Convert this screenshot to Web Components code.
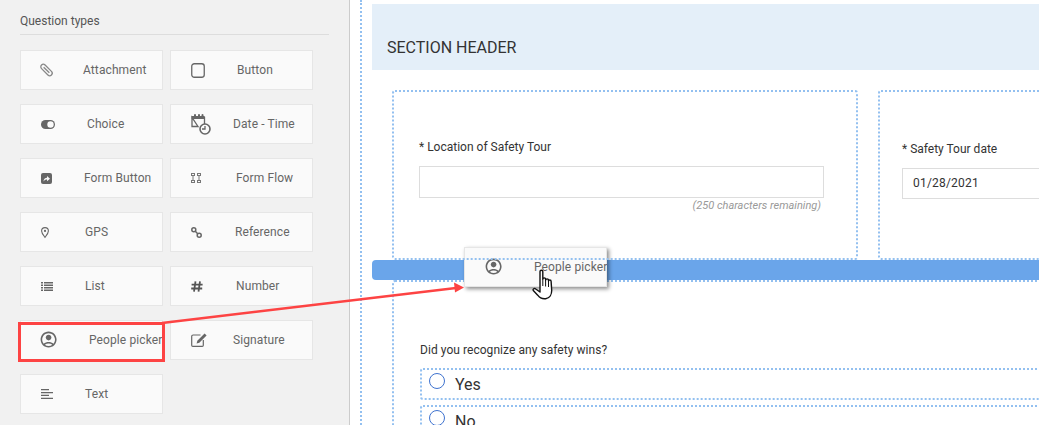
<!DOCTYPE html>
<html lang="en">
<head>
<meta charset="utf-8">
<title>Question types</title>
<style>
html,body{margin:0;padding:0;height:425px;overflow:hidden;background:#fff;font-family:Roboto,"Liberation Sans",sans-serif}
</style>
</head>
<body>
<form-builder></form-builder>
<script>
const M = (w,h,vb,body,extra='') => `<svg width="${w}" height="${h}" viewBox="${vb}" fill="#666" style="display:block;overflow:visible;${extra}" aria-hidden="true">${body}</svg>`;
const PERSON = '<path fill-rule="evenodd" d="M12 2C6.48 2 2 6.48 2 12s4.48 10 10 10 10-4.48 10-10S17.52 2 12 2zM7.35 18.5C8.66 17.56 10.26 17 12 17s3.34.56 4.65 1.5c-1.31.94-2.91 1.5-4.65 1.5s-3.34-.56-4.65-1.5zm10.79-1.38C16.45 15.8 14.32 15 12 15s-4.45.8-6.14 2.12C4.7 15.73 4 13.95 4 12c0-4.42 3.58-8 8-8s8 3.58 8 8c0 1.95-.7 3.73-1.86 5.12z"/><path d="M12 6c-1.93 0-3.5 1.57-3.5 3.5S10.07 13 12 13s3.5-1.57 3.5-3.5S13.93 6 12 6z"/>';
const ICONS = {
  attachment: M(11,12,'0 0 11 12','<g fill="none" stroke="#888" stroke-width="1.3" transform="rotate(-45 5.5 6)"><rect x="3" y="-1" width="5" height="14" rx="2.5"/><path d="M5.5 2v8"/></g>'),
  button: M(14,15,'0 0 14 15','<rect x=".75" y=".75" width="12.5" height="13.5" rx="2.5" fill="none" stroke="#666" stroke-width="1.3"/>'),
  choice: M(14,9,'0 0 14 9','<rect width="14" height="9" rx="4.5"/><circle cx="9.5" cy="4.5" r="3.2" fill="#fafafa"/>'),
  datetime: M(21,22,'0 0 21 22','<path d="M1 4.5h12.5v9M7 13.5H1V4.500z" fill="none" stroke="#666" stroke-width="1.3"/><rect x=".6" y="3" width="13" height="3" /><rect x="3" y="1" width="2" height="3.5" rx="1"/><rect x="7" y="1" width="2" height="3.500" rx="1"/><rect x="10.500" y="1" width="2" height="3.500" rx="1"/><circle cx="14" cy="16" r="5" fill="#fafafa" stroke="#666" stroke-width="1.600"/><path d="M14 13v3h-3" fill="none" stroke="#666" stroke-width="1.300"/>'),
  formbutton: M(11,11,'0 0 11 11','<rect width="11" height="11" rx="2"/><path d="M2.500 8.500c0-2.500 1.500-3.800 3.500-3.800V3l3 2.700L6 8.300V6.500c-1.500 0-2.500.6-3.500 2z" fill="#fafafa"/>'),
  formflow: M(10,10,'0 0 10 10','<g fill="none" stroke="#777" stroke-width="1"><rect x=".5" y=".5" width="3" height="2"/><rect x="6.500" y=".5" width="3" height="2"/><rect x=".5" y="7.500" width="3" height="2"/><rect x="6.500" y="7.500" width="3" height="2"/><path d="M2 2.500v5M8 2.500v5"/></g>'),
  gps: M(8,11,'0 0 8 11','<path d="M4 .6C2 .6.600 2.100.600 4c0 2.300 2.300 4.800 3.400 6.300C5.100 8.800 7.400 6.300 7.400 4 7.400 2.100 6 .6 4 .6z" fill="none" stroke="#666" stroke-width="1.100"/><circle cx="4" cy="3.900" r="1.100"/>'),
  reference: M(11,11,'0 0 11 11','<g fill="none" stroke="#666" stroke-width="1.500"><circle cx="2.800" cy="2.800" r="2"/><circle cx="8.200" cy="8.200" r="2"/><path d="M4.300 4.300l2.400 2.400"/></g>'),
  list: M(12,9,'0 0 12 9','<path d="M0 0h2v1.500H0zM3 0h9v1.500H3zM0 2.500h2V4H0zM3 2.500h9V4H3zM0 5h2v1.500H0zM3 5h9v1.500H3zM0 7.500h2V9H0zM3 7.500h9V9H3z"/>'),
  number: M(12,11,'0 0 12 11','<g fill="none" stroke="#555" stroke-width="1.800"><path d="M4.500.3L3 10.700M9 .3L7.500 10.700M.6 3.700h11M.2 7.500h11"/></g>'),
  person: M(19.200,19.200,'0 0 24 24',PERSON,'margin:-1.600px'),
  signature: M(16,14,'0 0 16 14','<path d="M9.500 2H2.200C1.300 2 .7 2.600.7 3.500v8.700c0 .6.500 1.100 1.100 1.100h9.400c.6 0 1.100-.5 1.100-1.100V7" fill="none" stroke="#666" stroke-width="1.200"/><path d="M13.600.4l2 2-7.300 7.300-2.700.7.700-2.700z"/>'),
  text: M(12,10,'0 0 12 10','<path d="M0 0h8v1.300H0zM0 2.900h12v1.300H0zM0 5.800h8v1.300H0zM0 8.700h12V10H0z"/>')
};

class BaseEl extends HTMLElement {
  render(html){ if(!this.shadowRoot) this.attachShadow({mode:'open'}); this.shadowRoot.innerHTML = html; }
}

class TypeCard extends BaseEl {
  connectedCallback(){
    const x = this.getAttribute('label-x');
    const i = ICONS[this.getAttribute('icon')];
    this.render(`<style>
      :host{display:block;box-sizing:border-box;height:40px;background:#fafafa;border:1px solid #e6e6e6;color:#666;font-size:12px}
      .in{display:grid;grid-template-columns:${x-21}px 1fr;align-items:center;height:38px;padding-left:20px}
      .l{white-space:nowrap;letter-spacing:.1px}
    </style><div class="in"><span>${i}</span><span class="l"><slot></slot></span></div>`);
  }
}
customElements.define('type-card', TypeCard);

class QuestionPanel extends BaseEl {
  connectedCallback(){
    this.render(`<style>
      :host{display:block;box-sizing:border-box;width:350px;height:425px;flex:none;background:#f1f1f1;border-right:1px solid #ccc;padding:0 20px}
      h2{margin:0;height:35px;box-sizing:border-box;padding-top:14px;font:400 12px/15px Roboto,sans-serif;color:#555;border-bottom:1px solid #ddd;width:309px}
      .g{display:grid;grid-template-columns:143px 143px;column-gap:7px;row-gap:14px;margin-top:15px}
    </style><h2>Question types</h2><div class="g"><slot></slot></div>`);
  }
}
customElements.define('question-panel', QuestionPanel);

class SectionHeader extends BaseEl {
  connectedCallback(){
    this.render(`<style>
      :host{display:block;box-sizing:border-box;height:66px;margin-top:4px;background:#e4eff9;padding:34px 0 0 15px;font-size:16px;line-height:19px;color:#333;white-space:nowrap;width:800px}
    </style><slot></slot>`);
  }
}
customElements.define('section-header', SectionHeader);

class FieldBox extends BaseEl {
  connectedCallback(){
    this.render(`<style>
      :host{display:block;box-sizing:border-box;border:2px dotted #93c0f0;border-radius:3px;flex:none;color:#333;font-size:12px}
    </style><slot></slot>`);
  }
}
customElements.define('field-box', FieldBox);

class TextField extends BaseEl {
  connectedCallback(){
    const h = this.getAttribute('h');
    const v = this.getAttribute('value')||'';
    this.render(`<style>
      :host{display:block}
      .lab{font-size:12px;line-height:14px;color:#333;white-space:nowrap;margin-bottom:${this.getAttribute('gap')}px}
      .inp{box-sizing:border-box;height:${h}px;border:1px solid #ddd;background:#fff;padding-left:10px;font-size:12px;line-height:${h-2}px;color:#333;letter-spacing:.2px}
      .hint{font-size:11px;font-style:italic;color:#999;text-align:right;padding:1px 3px 0 0;line-height:13px}
    </style><div class="lab"><slot></slot></div><div class="inp">${v}</div>${this.hasAttribute('hint')?`<div class="hint">${this.getAttribute('hint')}</div>`:''}`);
  }
}
customElements.define('text-field', TextField);

class RadioOption extends BaseEl {
  connectedCallback(){
    this.render(`<style>
      :host{display:flex;box-sizing:border-box;height:32px;border:2px dotted #93c0f0;border-radius:3px;padding-left:7px;font-size:16px;color:#333;gap:10px;width:640px}
      i{display:block;box-sizing:border-box;width:16px;height:16px;border:1px solid #3f73cf;border-radius:50%;margin-top:3px;background:#fff}
      span{line-height:19px;margin-top:5px}
    </style><i></i><span><slot></slot></span>`);
  }
}
customElements.define('radio-option', RadioOption);

class DragGhost extends BaseEl {
  connectedCallback(){
    this.render(`<style>
      :host{position:absolute;left:464px;top:247px;box-sizing:border-box;width:143px;height:40px;background:#fafafa;border:1px solid #e6e6e6;box-shadow:2px 2px 4px rgba(0,0,0,.45);color:#666;font-size:12px;display:grid;grid-template-columns:48px 1fr;align-items:center;padding-left:21px;letter-spacing:.1px;white-space:nowrap}
      svg{margin-top:0}
    </style><span>${ICONS.person}</span><span><slot></slot></span>`);
  }
}
customElements.define('drag-ghost', DragGhost);

class HandCursor extends BaseEl {
  connectedCallback(){
    this.render(`<style>
      :host{position:absolute;left:532px;top:268px;width:26px;height:33px;display:block}
    </style><svg width="26" height="33" viewBox="0 0 26 33" style="display:block">
      <path d="M8 3.500c0-1.600 2.700-1.600 2.800 0V11c0-1.500 2.800-1.500 2.800 0v1c0-1.500 2.900-1.500 2.900 0v1c0-1.400 2.600-1.300 2.600.3l.6 9c.1 4-2 7.700-6 8.400-3.700.5-6-.8-8-3.500L1.300 22.500c-.8-1.300 1-2.800 2.400-1.500L8 24z" fill="#fff" stroke="#111" stroke-width="1.400" stroke-linejoin="round"/>
      <path d="M10.800 11v7M13.600 12v6.500M16.500 13v6" stroke="#111" stroke-width="1" fill="none"/>
    </svg>`);
  }
}
customElements.define('hand-cursor', HandCursor);

class RedAnnotation extends BaseEl {
  connectedCallback(){
    this.render(`<style>
      :host{position:absolute;left:0;top:0;width:1039px;height:425px;display:block;pointer-events:none}
    </style><svg width="1039" height="425" viewBox="0 0 1039 425" style="display:block">
      <rect x="19.500" y="323.500" width="144" height="37" fill="none" stroke="#fd4343" stroke-width="3"/>
      <path d="M162 323L456 288" stroke="#fd4343" stroke-width="2.500" fill="none"/>
      <path d="M454 282.500L464 287.500L455 292.500z" fill="#fd4343"/>
    </svg>`);
  }
}
customElements.define('red-annotation', RedAnnotation);

class FormCanvas extends BaseEl {
  connectedCallback(){
    this.render(`<style>
      :host{display:block;box-sizing:border-box;flex:none;width:689px;height:425px;margin-left:10px;border-left:2px dotted #93c0f0;padding-left:10px;overflow:hidden}
      .row{display:flex;gap:20px;margin:20px 0 0 20px;height:170px;position:relative;z-index:1}
      .bar{height:20px;background:#6aa5ea;border-radius:4px 0 0 4px}
      .lower{margin-left:20px;height:200px;border-right:0;border-bottom:0;margin-top:0}
      .c1{width:466px;height:170px;padding:48px 32px 0 25px;box-sizing:border-box}
      .c2{width:300px;height:170px;padding:50px 0 0 22px;box-sizing:border-box}
      .q{font-size:12px;line-height:14px;color:#333;white-space:nowrap;margin:61px 0 11px 26px;letter-spacing:.05px}
      .opts{display:flex;flex-direction:column;gap:5px;margin-left:26px}
    </style>
    <section-header>SECTION HEADER</section-header>
    <div class="row">
      <field-box class="c1"><text-field h="32" gap="12" hint="(250 characters remaining)">* Location of Safety Tour</text-field></field-box>
      <field-box class="c2"><text-field h="31" gap="12" value="01/28/2021">* Safety Tour date</text-field></field-box>
    </div>
    <div class="bar"></div>
    <field-box class="lower">
      <div class="q">Did you recognize any safety wins?</div>
      <div class="opts"><radio-option>Yes</radio-option><radio-option>No</radio-option></div>
    </field-box>`);
  }
}
customElements.define('form-canvas', FormCanvas);

class FormBuilder extends BaseEl {
  connectedCallback(){
    this.render(`<style>
      :host{display:flex;position:relative;width:1039px;height:425px;overflow:hidden;font-family:Roboto,"Liberation Sans",sans-serif}
    </style>
    <question-panel>
      <type-card icon="attachment" label-x="63">Attachment</type-card>
      <type-card icon="button" label-x="67">Button</type-card>
      <type-card icon="choice" label-x="67">Choice</type-card>
      <type-card icon="datetime" label-x="63">Date - Time</type-card>
      <type-card icon="formbutton" label-x="64">Form Button</type-card>
      <type-card icon="formflow" label-x="66">Form Flow</type-card>
      <type-card icon="gps" label-x="65">GPS</type-card>
      <type-card icon="reference" label-x="65">Reference</type-card>
      <type-card icon="list" label-x="65">List</type-card>
      <type-card icon="number" label-x="66">Number</type-card>
      <type-card icon="person" label-x="69">People picker</type-card>
      <type-card icon="signature" label-x="63">Signature</type-card>
      <type-card icon="text" label-x="65">Text</type-card>
    </question-panel>
    <form-canvas></form-canvas>
    <drag-ghost>People picker</drag-ghost>
    <red-annotation></red-annotation>
    <hand-cursor></hand-cursor>`);
  }
}
customElements.define('form-builder', FormBuilder);
</script>
</body>
</html>
